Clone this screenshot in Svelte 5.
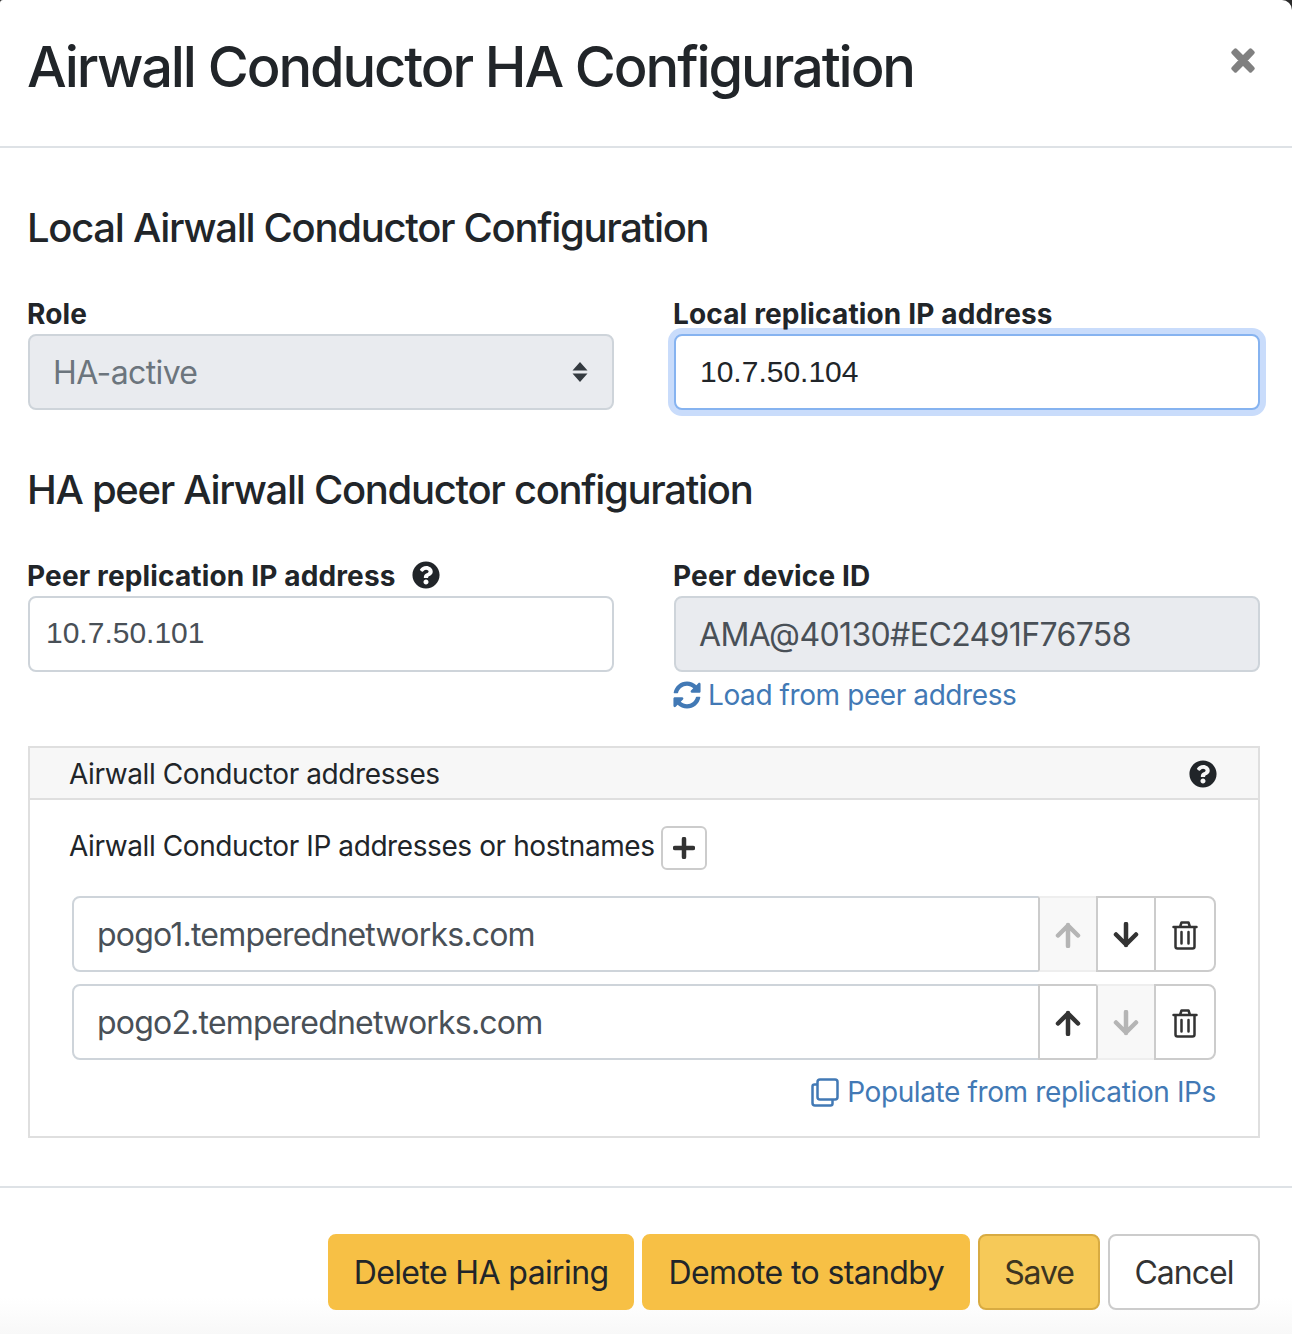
<script>
  const rows = [
    { value: 'pogo1.temperednetworks.com', upOff: true, downOff: false },
    { value: 'pogo2.temperednetworks.com', upOff: false, downOff: true }
  ];
  const help = 'M504 256c0 136.997-111.043 248-248 248S8 392.997 8 256C8 119.083 119.043 8 256 8s248 111.083 248 248zM262.655 90c-54.497 0-89.255 22.957-116.549 63.758-3.536 5.286-2.353 12.415 2.715 16.258l34.699 26.31c5.205 3.947 12.621 3.008 16.665-2.122 17.864-22.658 30.113-35.797 57.303-35.797 20.429 0 45.698 13.148 45.698 32.958 0 14.976-12.363 22.667-32.534 33.976C247.128 238.528 216 254.941 216 296v4c0 6.627 5.373 12 12 12h56c6.627 0 12-5.373 12-12v-1.333c0-28.462 83.186-29.647 83.186-106.667 0-58.002-60.165-102-116.531-102zM256 338c-25.365 0-46 20.635-46 46 0 25.364 20.635 46 46 46s46-20.636 46-46c0-25.365-20.635-46-46-46z';
</script>

<div class="modal">
  <header class="head">
    <h1>Airwall Conductor HA Configuration</h1>
    <button class="close" aria-label="Close">
      <svg width="26" height="27" viewBox="0 0 26 27"><path d="M3 5.500 5.500 3 13 10.500 20.500 3 23 5.500 15.500 13.500 23 21.500 20.500 24 13 16.500 5.500 24 3 21.500 10.500 13.500Z" fill="#808080" stroke="#808080" stroke-width="3.500" stroke-linejoin="round"/></svg>
    </button>
  </header>

  <main class="body">
    <h2>Local Airwall Conductor Configuration</h2>
    <div class="cols">
      <div>
        <div class="label">Role</div>
        <div class="field disabled select">
          <span>HA-active</span>
          <svg width="16" height="22" viewBox="0 0 16 22"><path d="M8 1 15.500 9.500H.5ZM8 21 .5 12.500H15.500Z" fill="#343a40"/></svg>
        </div>
      </div>
      <div>
        <div class="label">Local replication IP address</div>
        <input class="field focus plain" value="10.7.50.104" />
      </div>
    </div>

    <h2 class="second">HA peer Airwall Conductor configuration</h2>
    <div class="cols">
      <div>
        <div class="label">Peer replication IP address
          <svg class="help" width="28" height="28" viewBox="0 0 512 512"><path d={help} fill="#212529"/></svg>
        </div>
        <input class="field plain peer" value="10.7.50.101" />
      </div>
      <div>
        <div class="label">Peer device ID</div>
        <div class="field disabled device">AMA@40130#EC2491F76758</div>
        <div class="link load">
          <svg width="28" height="28" viewBox="0 0 512 512"><path fill="#4279b5" d="M370.72 133.280C339.458 104.008 298.888 87.962 255.848 88c-77.458.068-144.328 53.178-162.791 126.850-1.344 5.363-6.122 9.150-11.651 9.150H24.103c-7.498 0-13.194-6.807-11.807-14.176C33.933 94.924 134.813 8 256 8c66.448 0 126.791 26.136 171.315 68.685L463.030 40.970C478.149 25.851 504 36.559 504 57.941V192c0 13.255-10.745 24-24 24H345.941c-21.382 0-32.090-25.851-16.971-40.971l41.750-41.749zM32 296h134.059c21.382 0 32.090 25.851 16.971 40.971l-41.750 41.750c31.262 29.273 71.835 45.319 114.876 45.280 77.418-.07 144.315-53.144 162.787-126.849 1.344-5.363 6.122-9.150 11.651-9.150h57.304c7.498 0 13.194 6.807 11.807 14.176C478.067 417.076 377.187 504 256 504c-66.448 0-126.791-26.136-171.315-68.685L48.970 471.030C33.851 486.149 8 475.441 8 454.059V320c0-13.255 10.745-24 24-24z"/></svg>
          <span>Load from peer address</span>
        </div>
      </div>
    </div>

    <section class="panel">
      <div class="panel-head">
        <span>Airwall Conductor addresses</span>
        <svg width="28" height="28" viewBox="0 0 512 512"><path d={help} fill="#212529"/></svg>
      </div>
      <div class="panel-body">
        <div class="add-line">
          <span>Airwall Conductor IP addresses or hostnames</span>
          <button class="add" aria-label="Add">
            <svg width="22" height="22" viewBox="0 0 22 22"><path d="M11 2V20M2 11H20" stroke="#333" stroke-width="4.500" stroke-linecap="round"/></svg>
          </button>
        </div>
        {#each rows as row}
          <div class="group">
            <input class="host" value={row.value} />
            <button class="gbtn" class:off={row.upOff} aria-label="Move up">
              <svg width="26" height="26" viewBox="0 0 26 26"><path d="M13 24V3M3 13.500 13 3.500 23 13.500" fill="none" stroke="currentColor" stroke-width="4.500" stroke-linecap="round" stroke-linejoin="round"/></svg>
            </button>
            <button class="gbtn" class:off={row.downOff} aria-label="Move down">
              <svg width="26" height="26" viewBox="0 0 26 26"><path d="M13 2V23M3 12.500 13 22.500 23 12.500" fill="none" stroke="currentColor" stroke-width="4.500" stroke-linecap="round" stroke-linejoin="round"/></svg>
            </button>
            <button class="gbtn last" aria-label="Delete">
              <svg width="26" height="30" viewBox="0 0 26 30" fill="none" stroke="#333" stroke-width="2.500" stroke-linecap="round" stroke-linejoin="round"><path d="M1.500 7H24.500M8 7 9.500 2.500H16.500L18 7M3.500 7V26.500Q3.500 28.500 5.500 28.500H20.500Q22.500 28.500 22.500 26.500V7M9.500 12V23.500M16.500 12V23.500"/></svg>
            </button>
          </div>
        {/each}
        <div class="link populate">
          <svg width="28" height="29" viewBox="0 0 28 29" fill="none" stroke="#4279b5" stroke-width="2.500" stroke-linejoin="round"><rect x="6.500" y="1.500" width="20" height="20" rx="2.500"/><path d="M6.500 6.500H3.500Q1.500 6.500 1.500 8.500V25Q1.500 27.500 4 27.500H19.500Q21.500 27.500 21.500 25.500V21.500"/></svg>
          <span>Populate from replication IPs</span>
        </div>
      </div>
    </section>
  </main>

  <footer class="foot">
    <button class="btn warn">Delete HA pairing</button>
    <button class="btn warn">Demote to standby</button>
    <button class="btn save">Save</button>
    <button class="btn cancel">Cancel</button>
  </footer>
</div>

<style>
  :global(body) { margin: 0; background: #2b2b2b; }
  .modal {
    width: 1292px;
    height: 1334px;
    background: #fff;
    color: #212529;
    font-family: Inter, "Liberation Sans", sans-serif;
    overflow: hidden;
    box-sizing: border-box;
    display: flex;
    flex-direction: column;
    border-radius: 3px 10px 0 0;
  }
  .head {
    height: 148px;
    box-sizing: border-box;
    border-bottom: 2px solid #dee2e6;
    padding: 0 36px 0 27px;
    display: flex;
    justify-content: space-between;
    align-items: flex-start;
  }
  h1 {
    margin: 36px 0 0;
    font-size: 56px;
    line-height: 62px;
    font-weight: 500;
    letter-spacing: -2.1px;
  }
  .close {
    margin-top: 47px;
    padding: 0;
    border: 0;
    background: none;
    display: flex;
  }
  .body {
    padding: 56px 32px 0 28px;
    height: 1040px;
    box-sizing: border-box;
    border-bottom: 2px solid #dee2e6;
  }
  h2 {
    margin: 0 0 44px -1px;
    font-size: 40px;
    line-height: 48px;
    font-weight: 500;
    letter-spacing: -1.3px;
  }
  h2.second { margin-top: 56px; }
  .cols {
    display: grid;
    grid-template-columns: 586px 586px;
    gap: 60px;
  }
  .label {
    height: 38px;
    font-size: 28px;
    line-height: 36px;
    font-weight: 700;
    letter-spacing: 0.15px;
    display: flex;
    align-items: flex-start;
    gap: 16px;
    margin-left: -1px;
  }
  .help { margin-top: 3px; }
  .field {
    display: block;
    width: 100%;
    height: 76px;
    box-sizing: border-box;
    border: 2px solid #ced4da;
    border-radius: 8px;
    padding: 0 23px;
    font-family: Inter, sans-serif;
    font-size: 32px;
    letter-spacing: -0.62px;
    color: #495057;
    background: #fff;
    outline: none;
  }
  .disabled { background: #e9ebef; }
  .select {
    display: flex;
    align-items: center;
    justify-content: space-between;
    color: #6c757d;
    padding-right: 24px;
  }
  .device { line-height: 74px; }
  .plain { font-family: "Liberation Sans", sans-serif; font-size: 30px; letter-spacing: 0; padding: 0 24px; }
  .peer { padding: 0 16px 2px; }
  .focus {
    color: #212529;
    border-color: #86b3f0;
    box-shadow: 0 0 0 6px #c9dcfb;
  }
  .link {
    display: flex;
    align-items: center;
    color: #4279b5;
    font-size: 28px;
    letter-spacing: -0.41px;
    line-height: 38px;
  }
  .load { margin: 4px 0 0 -1px; gap: 7px; }
  .panel {
    margin-top: 32px;
    height: 392px;
    box-sizing: border-box;
    border: 2px solid #dfdfdf;
  }
  .panel-head {
    height: 52px;
    box-sizing: border-box;
    background: #f7f7f7;
    border-bottom: 2px solid #dfdfdf;
    padding: 1px 41px 0 39px;
    display: flex;
    align-items: center;
    justify-content: space-between;
    font-size: 28px;
    letter-spacing: -0.41px;
  }
  .panel-head span { padding-top: 1px; }
  .panel-body { padding: 26px 42px 0 39px; }
  .add-line {
    display: flex;
    align-items: center;
    gap: 6px;
    font-size: 28px;
    letter-spacing: -0.41px;
    height: 44px;
    margin-bottom: 26px;
  }
  .add-line span { padding-bottom: 4px; }
  .add {
    width: 46px;
    height: 44px;
    box-sizing: border-box;
    border: 2px solid #ccc;
    border-radius: 6px;
    background: #fff;
    padding: 0;
    display: flex;
    align-items: center;
    justify-content: center;
  }
  .group {
    display: flex;
    height: 76px;
    margin: 0 0 12px 3px;
  }
  .host {
    flex: 1;
    min-width: 0;
    box-sizing: border-box;
    border: 2px solid #ced4da;
    border-radius: 8px 0 0 8px;
    padding: 1px 23px 0;
    font-family: Inter, sans-serif;
    font-size: 32px;
    letter-spacing: -0.8px;
    color: #495057;
    outline: none;
  }
  .gbtn {
    width: 60px;
    box-sizing: border-box;
    margin-left: -2px;
    padding: 2px 0 0;
    border: 2px solid #ccc;
    background: #fff;
    color: #333;
    display: flex;
    align-items: center;
    justify-content: center;
  }
  .gbtn.off {
    background: #f8f8f8;
    color: #b5b5b5;
    border-top-color: #eee;
    border-bottom-color: #eee;
  }
  .gbtn.last {
    width: 62px;
    border-radius: 0 8px 8px 0;
  }
  .populate {
    justify-content: flex-end;
    gap: 8px;
    margin-top: 13px;
    letter-spacing: -0.38px;
  }
  .foot {
    flex: 1;
    box-sizing: border-box;
    padding: 46px 32px 0 0;
    display: flex;
    justify-content: flex-end;
    align-items: flex-start;
    gap: 8px;
    background: linear-gradient(#fff 110px, #f8f8f8 146px);
  }
  .btn {
    height: 76px;
    box-sizing: border-box;
    border-radius: 8px;
    font-family: Inter, sans-serif;
    font-size: 32px;
    letter-spacing: -0.62px;
    padding: 1px 24px 0;
    border: 2px solid transparent;
  }
  .warn { background: #f7c045; color: #212529; border-color: #f7c045; }
  .save { background: #f6c958; border-color: #d8ab42; color: #3d3520; width: 122px; padding: 1px 0 0; letter-spacing: -1.1px; }
  .cancel { background: #fff; border-color: #ccc; color: #333; width: 152px; padding: 1px 0 0; letter-spacing: -0.95px; }
</style>
